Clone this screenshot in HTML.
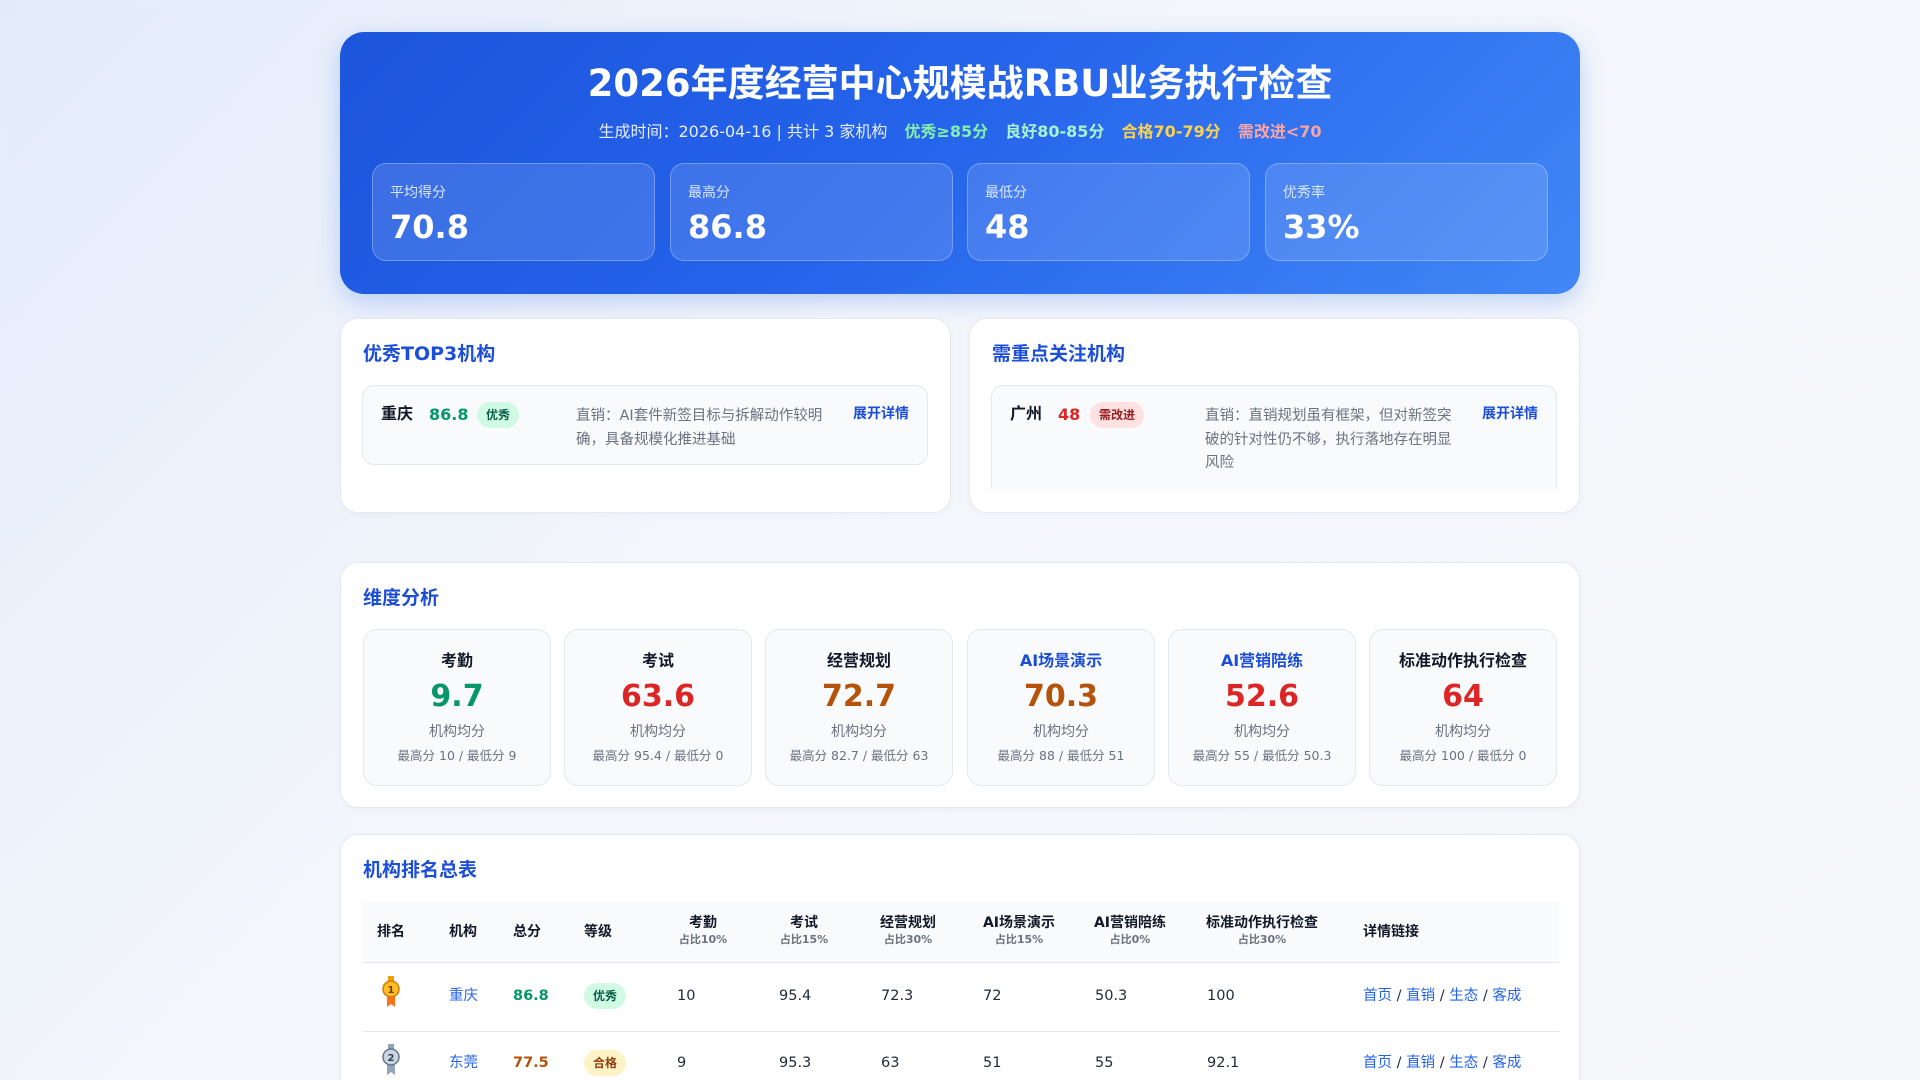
<!DOCTYPE html>
<html><head><meta charset="utf-8">
<style>
*{box-sizing:border-box;margin:0;padding:0}
html{width:1920px;height:1080px;overflow:hidden;background:linear-gradient(135deg,#e3ebfb 0%,#f3f6fb 40%,#f5f7fa 100%)}
body{width:1920px;height:1080px;overflow:hidden;font-family:"DejaVu Sans","Noto Sans CJK SC",sans-serif;line-height:1.25;position:relative;color:#1f2937}
.abs{position:absolute}
.hdr{left:340px;top:32px;width:1240px;height:262px;border-radius:24px;background:linear-gradient(135deg,#1c55dc 0%,#2563eb 45%,#4187f6 100%);box-shadow:0 8px 24px rgba(37,99,235,.25);color:#fff}
.hdr h1{position:absolute;top:29px;left:0;width:100%;text-align:center;font-size:37px;line-height:46px;font-weight:bold}
.sub{position:absolute;top:88px;left:0;width:100%;text-align:center;font-size:16px;line-height:24px;color:#e6edff}
.sub b{margin-left:12px}
.stat{top:131px;width:283px;height:98px;border-radius:14px;background:rgba(255,255,255,.13);border:1px solid rgba(255,255,255,.28)}
.stat .l{position:absolute;left:17px;top:19px;font-size:14px;line-height:20px;color:#dbe6ff}
.stat .v{position:absolute;left:17px;top:43px;font-size:32px;line-height:40px;font-weight:bold}
.card{background:#fff;border-radius:18px;border:1px solid #e5e9f0;box-shadow:0 2px 8px rgba(0,0,0,.03)}
.ttl{position:absolute;left:22px;font-size:19px;line-height:26px;font-weight:bold;color:#1d4ed8}
.item{position:absolute;left:21px;top:66px;background:#f8fafc;border:1px solid #e2e8f0;border-radius:12px}
.nm{position:absolute;left:18px;top:16px;font-size:16px;line-height:24px;font-weight:bold;color:#111827}
.sc{position:absolute;top:17px;font-size:16px;line-height:24px;font-weight:bold}
.badge{position:absolute;top:16px;height:26px;line-height:26px;padding:0 9px;border-radius:13px;font-size:12px;font-weight:bold}
.desc{position:absolute;font-size:14.5px;line-height:23.5px;color:#6b7280}
.exp{position:absolute;top:18px;font-size:14px;line-height:20px;font-weight:bold;color:#1d4ed8}
.dim{top:66px;width:188px;height:157px;border-radius:14px;background:#f8fafc;border:1px solid #e2e8f0;text-align:center}
.dim .t{position:absolute;top:19px;width:100%;font-size:16px;line-height:24px;font-weight:bold;color:#111827}
.dim .n{position:absolute;top:48px;width:100%;font-size:30px;line-height:38px;font-weight:bold}
.dim .a{position:absolute;top:92px;width:100%;font-size:14px;line-height:20px;color:#6b7280}
.dim .m{position:absolute;top:117px;width:100%;font-size:12.5px;line-height:18px;color:#6b7280}
.th{position:absolute;font-size:14px;line-height:19px;font-weight:bold;color:#111827}
.th small{display:block;font-size:11px;line-height:14px;color:#6b7280;font-weight:bold}
.td{position:absolute;font-size:14.5px;line-height:20px;color:#1f2937}
.lnk{color:#2563eb}
</style></head><body>
<div class="abs hdr">
<h1>2026年度经营中心规模战RBU业务执行检查</h1>
<div class="sub">生成时间：2026-04-16 | 共计 3 家机构 <b style="color:#86efac">优秀≥85分</b> <b style="color:#a7f3d0">良好80-85分</b> <b style="color:#fcd34d">合格70-79分</b> <b style="color:#fca5a5">需改进&lt;70</b></div>
<div class="abs stat" style="left:32px"><div class="l">平均得分</div><div class="v">70.8</div></div>
<div class="abs stat" style="left:330px"><div class="l">最高分</div><div class="v">86.8</div></div>
<div class="abs stat" style="left:627px"><div class="l">最低分</div><div class="v">48</div></div>
<div class="abs stat" style="left:925px"><div class="l">优秀率</div><div class="v">33%</div></div>
</div>

<div class="abs card" style="left:340px;top:318px;width:611px;height:195px">
<div class="ttl" style="top:22px">优秀TOP3机构</div>
<div class="item" style="width:566px;height:80px">
<div class="nm">重庆</div><div class="sc" style="left:66px;color:#059669">86.8</div>
<div class="badge" style="left:114px;background:#d1fae5;color:#065f46">优秀</div>
<div class="desc" style="left:213px;top:19px;width:256px">直销：AI套件新签目标与拆解动作较明确，具备规模化推进基础</div>
<div class="exp" style="left:490px">展开详情</div>
</div>
</div>
<div class="abs card" style="left:969px;top:318px;width:611px;height:195px">
<div class="ttl" style="top:22px">需重点关注机构</div>
<div class="item" style="width:566px;height:104px;border-bottom:none;border-radius:12px 12px 0 0">
<div class="nm">广州</div><div class="sc" style="left:66px;color:#dc2626">48</div>
<div class="badge" style="left:98px;background:#fee2e2;color:#991b1b">需改进</div>
<div class="desc" style="left:213px;top:19px;width:250px">直销：直销规划虽有框架，但对新签突破的针对性仍不够，执行落地存在明显风险</div>
<div class="exp" style="left:490px">展开详情</div>
</div>
</div>

<div class="abs card" style="left:340px;top:562px;width:1240px;height:246px">
<div class="ttl" style="top:22px">维度分析</div>
<div class="abs dim" style="left:22px"><div class="t">考勤</div><div class="n" style="color:#059669">9.7</div><div class="a">机构均分</div><div class="m">最高分 10 / 最低分 9</div></div>
<div class="abs dim" style="left:223px"><div class="t">考试</div><div class="n" style="color:#dc2626">63.6</div><div class="a">机构均分</div><div class="m">最高分 95.4 / 最低分 0</div></div>
<div class="abs dim" style="left:424px"><div class="t">经营规划</div><div class="n" style="color:#b45309">72.7</div><div class="a">机构均分</div><div class="m">最高分 82.7 / 最低分 63</div></div>
<div class="abs dim" style="left:626px"><div class="t" style="color:#1d4ed8">AI场景演示</div><div class="n" style="color:#b45309">70.3</div><div class="a">机构均分</div><div class="m">最高分 88 / 最低分 51</div></div>
<div class="abs dim" style="left:827px"><div class="t" style="color:#1d4ed8">AI营销陪练</div><div class="n" style="color:#dc2626">52.6</div><div class="a">机构均分</div><div class="m">最高分 55 / 最低分 50.3</div></div>
<div class="abs dim" style="left:1028px"><div class="t">标准动作执行检查</div><div class="n" style="color:#dc2626">64</div><div class="a">机构均分</div><div class="m">最高分 100 / 最低分 0</div></div>
</div>

<div class="abs card" style="left:340px;top:834px;width:1240px;height:270px">
<div class="ttl" style="top:22px">机构排名总表</div>
<div class="abs" style="left:22px;top:67px;width:1196px;height:61px;background:#f8fafc;border-bottom:1px solid #e5e7eb"></div>
<div class="abs" style="left:22px;top:196px;width:1196px;height:1px;background:#e5e7eb"></div>
<div class="th" style="left:36px;top:88px">排名</div>
<div class="th" style="left:108px;top:88px">机构</div>
<div class="th" style="left:172px;top:88px">总分</div>
<div class="th" style="left:243px;top:88px">等级</div>
<div class="th" style="left:312px;top:79px;width:100px;text-align:center">考勤<small>占比10%</small></div>
<div class="th" style="left:413px;top:79px;width:100px;text-align:center">考试<small>占比15%</small></div>
<div class="th" style="left:517px;top:79px;width:100px;text-align:center">经营规划<small>占比30%</small></div>
<div class="th" style="left:628px;top:79px;width:100px;text-align:center">AI场景演示<small>占比15%</small></div>
<div class="th" style="left:739px;top:79px;width:100px;text-align:center">AI营销陪练<small>占比0%</small></div>
<div class="th" style="left:851px;top:79px;width:140px;text-align:center">标准动作执行检查<small>占比30%</small></div>
<div class="th" style="left:1022px;top:88px">详情链接</div>

<svg class="abs" style="left:41px;top:141px" width="18" height="32" viewBox="0 0 18 32"><path d="M5 20 L5 31 L9 28 L13 31 L13 20Z" fill="#f97316"/><rect x="6" y="0" width="6" height="6" fill="#f59e0b"/><circle cx="9" cy="13" r="8" fill="#fbbf24" stroke="#d97706" stroke-width="1.5"/><text x="9" y="17" font-size="10" font-weight="bold" text-anchor="middle" fill="#78350f" font-family="DejaVu Sans">1</text></svg>
<div class="td lnk" style="left:108px;top:151px">重庆</div>
<div class="td" style="left:172px;top:151px;font-weight:bold;color:#059669">86.8</div>
<div class="badge" style="left:243px;top:148px;background:#d1fae5;color:#065f46">优秀</div>
<div class="td" style="left:336px;top:151px">10</div>
<div class="td" style="left:438px;top:151px">95.4</div>
<div class="td" style="left:540px;top:151px">72.3</div>
<div class="td" style="left:642px;top:151px">72</div>
<div class="td" style="left:754px;top:151px">50.3</div>
<div class="td" style="left:866px;top:151px">100</div>
<div class="td" style="left:1022px;top:151px"><span class="lnk">首页</span> / <span class="lnk">直销</span> / <span class="lnk">生态</span> / <span class="lnk">客成</span></div>

<svg class="abs" style="left:41px;top:209px" width="18" height="32" viewBox="0 0 18 32"><path d="M5 20 L5 31 L9 28 L13 31 L13 20Z" fill="#94a3b8"/><rect x="6" y="0" width="6" height="6" fill="#94a3b8"/><circle cx="9" cy="13" r="8" fill="#cbd5e1" stroke="#64748b" stroke-width="1.5"/><text x="9" y="17" font-size="10" font-weight="bold" text-anchor="middle" fill="#334155" font-family="DejaVu Sans">2</text></svg>
<div class="td lnk" style="left:108px;top:218px">东莞</div>
<div class="td" style="left:172px;top:218px;font-weight:bold;color:#b45309">77.5</div>
<div class="badge" style="left:243px;top:215px;background:#fef3c7;color:#92400e">合格</div>
<div class="td" style="left:336px;top:218px">9</div>
<div class="td" style="left:438px;top:218px">95.3</div>
<div class="td" style="left:540px;top:218px">63</div>
<div class="td" style="left:642px;top:218px">51</div>
<div class="td" style="left:754px;top:218px">55</div>
<div class="td" style="left:866px;top:218px">92.1</div>
<div class="td" style="left:1022px;top:218px"><span class="lnk">首页</span> / <span class="lnk">直销</span> / <span class="lnk">生态</span> / <span class="lnk">客成</span></div>
</div>
</body></html>
